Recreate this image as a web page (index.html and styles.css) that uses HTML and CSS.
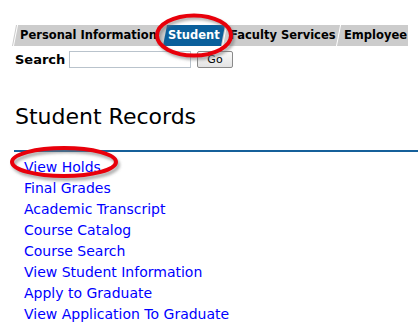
FILE: index.html
```html
<!DOCTYPE html>
<html>
<head>
<meta charset="utf-8">
<link rel="stylesheet" href="styles.css">
</head>
<body>
<div class="page">
  <div class="tabs">
    <div class="tab tab-first">Personal Information</div>
    <div class="tab tab-active">Student</div>
    <div class="tab tab-faculty">Faculty Services</div>
    <div class="tab tab-last">Employee</div>
  </div>
  <form class="search">
    <label class="search-label">Search</label>
    <input class="search-input" type="text">
    <button class="search-go" type="button">Go</button>
  </form>
  <h1 class="title">Student Records</h1>
  <div class="rule"></div>
  <ul class="links">
    <li><a href="#">View Holds</a></li>
    <li><a href="#">Final Grades</a></li>
    <li><a href="#">Academic Transcript</a></li>
    <li><a href="#">Course Catalog</a></li>
    <li><a href="#">Course Search</a></li>
    <li><a href="#">View Student Information</a></li>
    <li><a href="#">Apply to Graduate</a></li>
    <li><a href="#">View Application To Graduate</a></li>
  </ul>
  <svg class="marks" width="418" height="327" viewBox="0 0 418 327">
    <defs>
      <filter id="blur" x="-20%" y="-40%" width="140%" height="180%">
        <feGaussianBlur stdDeviation="1.5"/>
      </filter>
    </defs>
    <ellipse cx="196" cy="38" rx="37" ry="20" fill="none" stroke="#777" stroke-opacity="0.6" stroke-width="4" filter="url(#blur)"/>
    <ellipse cx="194" cy="35.5" rx="37" ry="20" fill="none" stroke="#e8000b" stroke-width="4"/>
    <ellipse cx="66" cy="165" rx="52" ry="14" fill="none" stroke="#777" stroke-opacity="0.6" stroke-width="4" filter="url(#blur)"/>
    <ellipse cx="64" cy="162" rx="52" ry="14" fill="none" stroke="#e8000b" stroke-width="4"/>
  </svg>
</div>
</body>
</html>
```
FILE: styles.css
```css
html, body {
  margin: 0;
  padding: 0;
  background: #fff;
}
.page {
  position: relative;
  width: 418px;
  height: 327px;
  overflow: hidden;
  font-family: "DejaVu Sans", Verdana, sans-serif;
}
.tabs {
  display: flex;
  margin-top: 25px;
  padding-left: 12px;
  height: 21px;
}
.tab {
  position: relative;
  box-sizing: border-box;
  height: 21px;
  line-height: 21px;
  background: #cccccc;
  color: #000;
  font-weight: bold;
  font-size: 11.5px;
  white-space: nowrap;
  padding: 0 0 0 9px;
  margin-left: -4px;
  clip-path: polygon(4px 0, 100% 0, 100% 100%, 0 100%);
  overflow: hidden;
  flex: none;
}
.tab::before {
  content: "";
  position: absolute;
  left: 1px;
  top: 0;
  width: 1px;
  height: 100%;
  background: #fff;
  transform: skewX(-11deg);
  transform-origin: bottom left;
}
.tab-first {
  margin-left: 0;
  width: 155px;
  padding-left: 8px;
}
.tab-active {
  width: 62px;
  background: #0b5f9b;
  color: #fff;
  padding-left: 5px;
}
.tab-active::before {
  display: none;
}
.tab-faculty {
  width: 118px;
}
.tab-last {
  width: 73px;
}
.search {
  display: flex;
  align-items: center;
  margin: 5px 0 0 15px;
  height: 17px;
}
.search-label {
  font-weight: bold;
  font-size: 13px;
  width: 54px;
}
.search-input {
  box-sizing: border-box;
  width: 122px;
  height: 17px;
  margin: 0;
  border: 1px solid #b9c3cc;
  background: #fff;
  padding: 0;
}
.search-go {
  box-sizing: border-box;
  margin: 0 0 0 6px;
  width: 36px;
  height: 17px;
  padding: 0;
  font-family: "DejaVu Sans", Verdana, sans-serif;
  font-size: 11px;
  color: #000;
  background: linear-gradient(#fafafa, #e4e4e4);
  border: 1px solid #8a8a8a;
  border-radius: 2px;
}
.title {
  margin: 35px 0 0 15px;
  font-size: 22px;
  font-weight: normal;
  line-height: 28px;
  color: #000;
}
.rule {
  margin: 19px 0 0 14px;
  height: 2px;
  background: #15609a;
}
.links {
  list-style: none;
  margin: 5px 0 0 24px;
  padding: 0;
}
.links li {
  height: 21px;
  line-height: 21px;
  font-size: 14px;
}
.links a {
  color: #0000ff;
  text-decoration: none;
}
.marks {
  position: absolute;
  left: 0;
  top: 0;
  pointer-events: none;
}
```
